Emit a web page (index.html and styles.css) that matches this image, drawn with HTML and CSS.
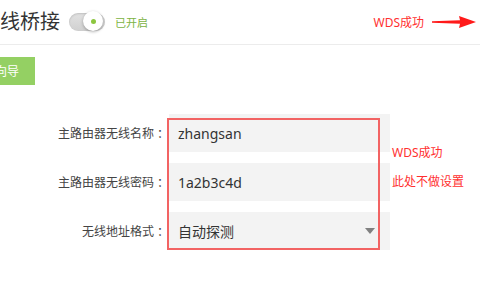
FILE: index.html
```html
<!DOCTYPE html>
<html lang="zh-CN">
<head>
    <meta charset="UTF-8">
    <meta name="viewport" content="width=device-width, initial-scale=1.0">
    <title>无线桥接</title>
    <link rel="stylesheet" href="styles.css">
</head>
<body>
    <div class="page">
        <!-- 标题栏 -->
        <div class="header">
            <h1 class="title">无线桥接</h1>
            <span class="switch"><span class="knob"></span></span>
            <span class="status">已开启</span>
            <span class="tip tip-top">WDS成功</span>
            <svg class="arrow" width="44" height="12" viewBox="0 0 44 12">
                <path d="M0 5.2 L28 4.2 L27 0 L44 6 L27 12 L28 7.8 L0 6.8 Z" fill="#ff1a1a"/>
            </svg>
        </div>

        <button class="wizard" type="button">向导</button>

        <!-- 桥接设置 -->
        <div class="form">
            <div class="fields">
                <div class="row">
                    <label class="label">主路由器无线名称 ：</label>
                    <div class="input">zhangsan</div>
                </div>
                <div class="row">
                    <label class="label">主路由器无线密码 ：</label>
                    <div class="input">1a2b3c4d</div>
                </div>
                <div class="row">
                    <label class="label">无线地址格式 ：</label>
                    <div class="input select">自动探测<span class="caret"></span></div>
                </div>
                <div class="mark"></div>
            </div>
            <div class="notes">
                <div class="tip">WDS成功</div>
                <div class="tip">此处不做设置</div>
            </div>
        </div>
    </div>
</body>
</html>
```

FILE: styles.css
```css
body { margin: 0; background: #fff; overflow: hidden; font-family: "Noto Sans", "Noto Sans CJK SC", sans-serif; color: #333; }
.page { margin-left: -20px; }

.header { display: flex; align-items: center; height: 44px; border-bottom: 1px solid #ececec; }
.title { margin: 0; font-size: 20px; font-weight: normal; color: #333; line-height: 40px; }
.switch { position: relative; width: 36px; height: 18px; margin-left: 9px; border-radius: 9px; background: linear-gradient(#e2e2e2, #d0d0d0); box-shadow: inset 0 1px 2px rgba(0,0,0,0.15); }
.knob { position: absolute; right: 2px; top: -2px; width: 20px; height: 20px; border-radius: 50%; background: #fff; box-shadow: 0 1px 3px rgba(0,0,0,0.3); display: flex; align-items: center; justify-content: center; }
.knob::after { content: ""; width: 5px; height: 5px; border-radius: 50%; background: #8cc63f; }
.status { margin-left: 10px; font-size: 11px; color: #7cb342; }
.tip { font-size: 12px; color: #ff3030; }
.tip-top { margin-left: auto; }
.arrow { margin: 0 4px 0 8px; }

.wizard { display: block; margin-top: 12px; height: 28px; width: 55px; padding: 0 1px 0 0; border: none; background: #94d063; color: #fff; font-family: inherit; font-size: 12px; }

.form { display: flex; margin-top: 29px; }
.fields { position: relative; display: flex; flex-direction: column; gap: 11px; }
.row { display: flex; align-items: center; gap: 0; }
.label { width: 189px; text-align: right; font-size: 12px; color: #444; white-space: pre; }
.input { display: flex; align-items: center; box-sizing: border-box; width: 221px; height: 38px; padding: 0 9px; background: #f3f3f3; font-size: 14px; color: #333; }
.select { justify-content: space-between; padding-right: 15px; }
.caret { width: 0; height: 0; border-left: 5.5px solid transparent; border-right: 5.5px solid transparent; border-top: 6px solid #808080; }
.mark { position: absolute; left: 187px; right: 10px; top: 4px; bottom: 0; border: 2px solid #f26363; pointer-events: none; }

.notes { margin-left: 2px; padding-top: 24px; line-height: 29px; }
```
